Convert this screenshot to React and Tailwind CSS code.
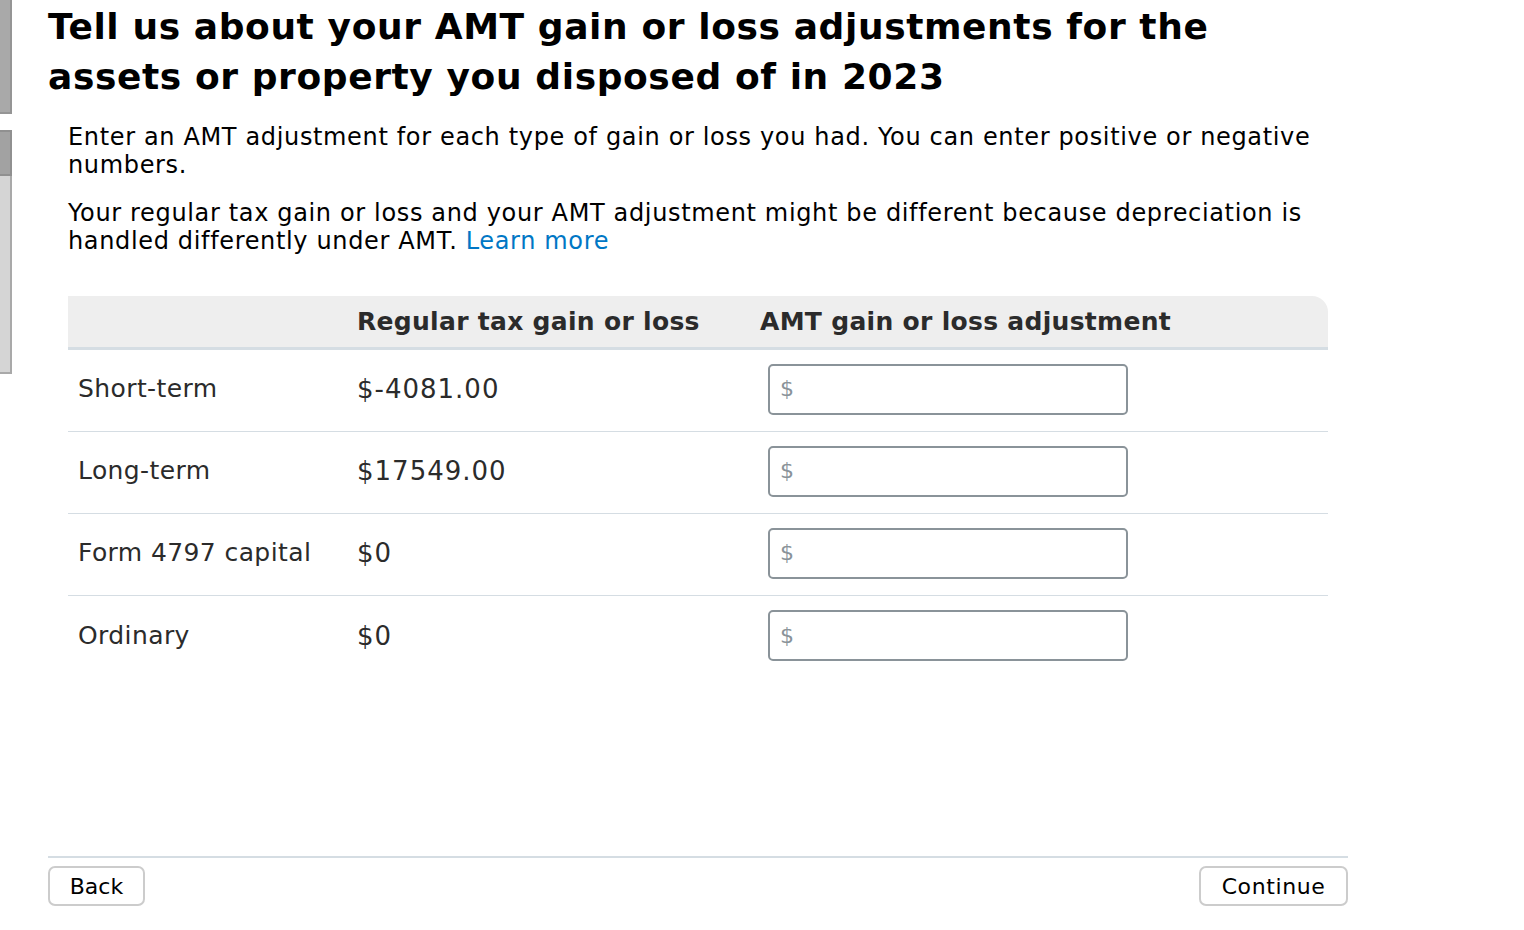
import React from 'react';

const rows = [
  { label: 'Short-term', value: '$-4081.00' },
  { label: 'Long-term', value: '$17549.00' },
  { label: 'Form 4797 capital', value: '$0' },
  { label: 'Ordinary', value: '$0' },
];

function AmtInput() {
  return (
    <div className="ml-2 flex h-[51px] w-[360px] items-center rounded-[5px] border-2 border-[#8a9399] bg-white px-[10px]">
      <span className="text-[22px] text-[#8a9399]">$</span>
      <input className="ml-1 h-full flex-1 bg-transparent outline-none" />
    </div>
  );
}

export default function App() {
  return (
    <div className="flex h-[930px] w-full bg-white text-black" style={{ fontFamily: '"DejaVu Sans", "Liberation Sans", sans-serif' }}>
      {/* window edge on the left */}
      <aside className="flex w-[12px] shrink-0 flex-col">
        <div className="h-[114px] border-2 border-l-0 border-t-0 border-[#959595] bg-[#a9a9a9]" />
        <div className="mt-[16px] h-[46px] border-2 border-l-0 border-[#909090] bg-[#a2a2a2]" />
        <div className="h-[198px] border-2 border-l-0 border-t-0 border-[#a9a9a9] bg-[#d5d5d5]" />
      </aside>

      <main className="ml-[36px] flex w-[1300px] flex-col">
        <h1 className="mt-[2px] text-[36px] font-bold leading-[50px] tracking-[0.6px]">
          Tell us about your AMT gain or loss adjustments for the<br />
          assets or property you disposed of in 2023
        </h1>

        <div className="pl-5 text-[24px] leading-[28px] tracking-[0.65px]">
          <p className="mt-[21px]">
            Enter an AMT adjustment for each type of gain or loss you had. You can enter positive or negative<br />
            numbers.
          </p>
          <p className="mt-[20px]">
            Your regular tax gain or loss and your AMT adjustment might be different because depreciation is<br />
            handled differently under AMT.{' '}
            <a href="#" className="text-[#0077c5]">Learn more</a>
          </p>

          <div className="mt-[41px] w-[1260px]">
            <div className="grid h-[54px] grid-cols-[279px_403px_1fr] items-center rounded-tr-[16px] border-b-[3px] border-[#d5dde3] bg-[#eeeeee] text-[25px] font-bold tracking-[0.3px] text-[#2b2b2b]">
              <div />
              <div className="px-[10px]">Regular tax gain or loss</div>
              <div className="px-[10px]">AMT gain or loss adjustment</div>
            </div>
            {rows.map((r, i) => (
              <div
                key={r.label}
                className={`grid h-[82px] grid-cols-[279px_403px_1fr] items-center pb-[3px] text-[#2b2b2b] ${i < rows.length - 1 ? 'border-b border-[#d5dde3]' : ''}`}
              >
                <div className="px-[10px] text-[25px] tracking-[0.4px]">{r.label}</div>
                <div className="px-[10px] text-[26px] tracking-[1px]">{r.value}</div>
                <div className="px-[10px]">
                  <AmtInput />
                </div>
              </div>
            ))}
          </div>
        </div>

        <footer className="mt-auto mb-[24px] flex items-start justify-between border-t-2 border-[#d5dde3] pt-[8px]">
          <button className="h-[40px] w-[97px] rounded-[7px] border-2 border-[#cccccc] bg-white text-[22px]">Back</button>
          <button className="h-[40px] w-[149px] rounded-[7px] border-2 border-[#cccccc] bg-white text-[22px] tracking-[0.6px]">Continue</button>
        </footer>
      </main>
    </div>
  );
}
